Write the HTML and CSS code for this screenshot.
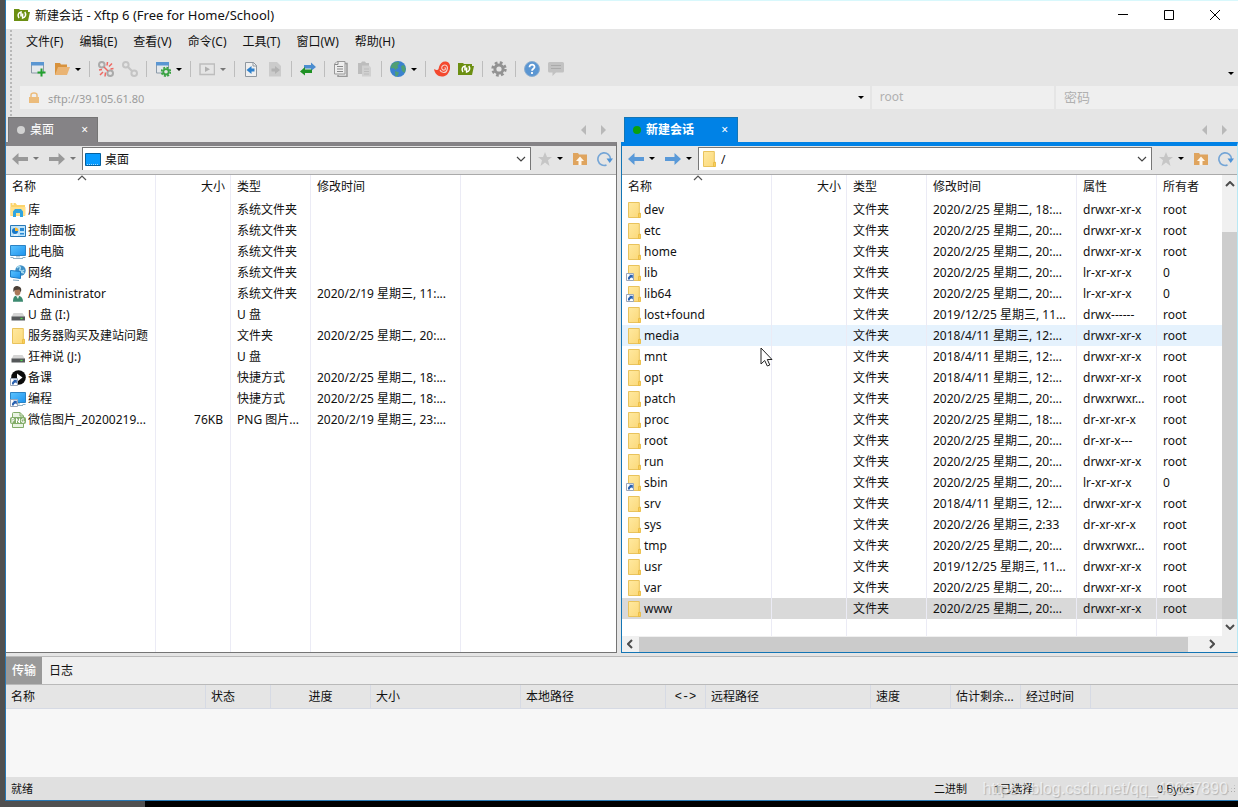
FILE: index.html
```html
<!DOCTYPE html>
<html lang="zh-CN">
<head>
<meta charset="utf-8">
<title>新建会话 - Xftp 6 (Free for Home/School)</title>
<link rel="stylesheet" href="styles.css">
</head>
<body>
<svg class="defs" aria-hidden="true">
  <linearGradient id="gf" x1="0" y1="0" x2="1" y2="1"><stop offset="0" stop-color="#ffe9a0"/><stop offset="1" stop-color="#fbd878"/></linearGradient>
  <linearGradient id="gb" x1="0" y1="0" x2="1" y2="1"><stop offset="0" stop-color="#5cc4ff"/><stop offset="1" stop-color="#1d93ee"/></linearGradient>
  <symbol id="xftp" viewBox="0 0 16 16"><path d="M0 2h5l1 1h8v2h2l-2 9H0z" fill="#6c8f12"/><path d="M5 11C3.200 8.500 4.200 5.500 7 5v4.500M8.600 6.500V11C11.500 10.500 12.500 7.500 10.800 5" fill="none" stroke="#fff" stroke-width="1.500"/></symbol>
  <symbol id="folder" viewBox="0 0 16 16"><path d="M2.500.5h10.800v10.500h1v4.500H2.500z" fill="url(#gf)" stroke="#e9c35c"/><path d="M12.500 11.500v4h1.800v-4z" fill="#fdd364" stroke="#e9b93c" stroke-width=".8"/></symbol>
  <symbol id="link" viewBox="0 0 16 16"><path d="M.5 8.500h7v7h-7z" fill="#fff" stroke="#9aa6b8"/><path d="M2 14.500c-.3-2 .5-3.500 2-3.700L3 9.800h3.800v3.700L5.600 12.400C4.300 12.600 3.800 13.300 3.800 14.500z" fill="#2760b0"/></symbol>
  <symbol id="folderlink" viewBox="0 0 16 16"><use href="#folder"/><use href="#link"/></symbol>
  <symbol id="lib" viewBox="0 0 16 16"><path d="M.5 1h5l1.500 2h8v11H.5z" fill="#fbd46c"/><path d="M2 2h2" stroke="#fff"/><path d="M.5 5h15v8.500H.5z" fill="#ffe08a"/><path d="M3 15V9.500L5 7h6l2 2.500V15h-3v-4H6v4z" fill="#2fa5e0"/></symbol>
  <symbol id="panel" viewBox="0 0 16 16"><path d="M.5 2.500h15v11H.5z" fill="#bfe4fa" stroke="#2a7ab8"/><circle cx="5" cy="8" r="3" fill="#1878c8"/><path d="M5 4.500V8h3.500A3.500 3.500 0 0 0 5 4.500z" fill="#ffb92e"/><path d="M10 5h4v3h-4zM10 10h4v1.500h-4z" fill="#2b8ad4"/><path d="M4 12h4" stroke="#fff"/></symbol>
  <symbol id="pc" viewBox="0 0 16 16"><path d="M.5 1.500h15v10H.5z" fill="url(#gb)" stroke="#2c83c4"/><path d="M6 12h4v1.500H6z" fill="#b9cfdc"/><path d="M3 14.500h10M.5 13.500h3M12.500 13.500h3" stroke="#8fb0c4"/></symbol>
  <symbol id="net" viewBox="0 0 16 16"><circle cx="10.500" cy="5.500" r="5.200" fill="#3f8fc6"/><path d="M7 3c2-3 4-1 3 1s2 3 4 1M11 7l3 1" stroke="#a9dcf0" stroke-width="1.500" fill="none"/><path d="M.5 5.500l10 1v7l-10-1.500z" fill="url(#gb)" stroke="#1e7cc4"/><path d="M3 15l6 .5" stroke="#7fa7c0"/></symbol>
  <symbol id="user" viewBox="0 0 16 16"><path d="M3 15.800c0-4 1-6 4-6.300s6 1.800 6 6.300z" fill="#3c8a70"/><path d="M5.500 9l2.500 4 1.500-4z" fill="#e8f2ee"/><ellipse cx="7.500" cy="5.500" rx="3" ry="4" fill="#a9795a"/><path d="M3.500 6C2.500 1 5-.3 8 .2s4 3 2.700 6L9.500 3.500 5 4z" fill="#4a4038"/></symbol>
  <symbol id="drive" viewBox="0 0 16 16"><path d="M3.500 6h9L15 10H1.500z" fill="#d5d5d5"/><path d="M1.500 9.500h13.500v4H1.500z" fill="#55585a"/><path d="M10.500 11.500h2" stroke="#4ee04e" stroke-width="1.300"/></symbol>
  <symbol id="play" viewBox="0 0 16 16"><circle cx="8.500" cy="7.500" r="7.300" fill="#0b0b0b"/><path d="M7 3.500l5.500 4-5.500 4.200z" fill="#fff"/><use href="#link"/></symbol>
  <symbol id="pclink" viewBox="0 0 16 16"><use href="#pc"/><use href="#link"/></symbol>
  <symbol id="png" viewBox="0 0 16 16"><path d="M2.500 15.500V1.500Q2.500.5 3.500.5H10l3.500 3.500v11.500z" fill="#e9f3e2" stroke="#83ad69"/><path d="M10 .5V4h3.500" fill="none" stroke="#83ad69"/><rect y="5" width="16" height="7" rx="2" fill="#83ad69"/><path d="M2 11V6.500h1.500q1 1.200 0 2.500H2M6.500 11V6.500l3 4.500V6.500M14 7q-2.500-1-2.700 1.500t2.700 1.800V9h-1.200" fill="none" stroke="#fff"/></symbol>
  <symbol id="desk" viewBox="0 0 16 14"><path d="M.5 1.500h15v12H.5z" fill="#079bff" stroke="#05609e"/><path d="M2 12.500h12" stroke="#a7dcff" stroke-dasharray="1 1"/></symbol>
  <symbol id="newwin" viewBox="0 0 16 16"><path d="M1.500 1.500h12v10.500h-12z" fill="#e4e8ec" stroke="#8b9aa8"/><path d="M1 1h13v3.500H1z" fill="#5a96d2"/><path d="M11.500 7.500v8M7.500 11.500h8" stroke="#22a02e" stroke-width="2"/></symbol>
  <symbol id="open" viewBox="0 0 16 16"><path d="M1 2h5l1 1.500h6V7H5l-3 7H1z" fill="#d8923c"/><path d="M4 6h12l-3 8H1z" fill="#eab474"/></symbol>
  <symbol id="chain" viewBox="0 0 16 16"><circle cx="3.800" cy="3.800" r="2.800" fill="none" stroke="currentColor" stroke-width="2"/><circle cx="12.200" cy="12.200" r="2.800" fill="none" stroke="currentColor" stroke-width="2"/><path d="M5.500 5.500l5 5" stroke="currentColor" stroke-width="2.200"/></symbol>
  <symbol id="unchain" viewBox="0 0 16 16"><circle cx="3.800" cy="3.800" r="2.800" fill="none" stroke="#aaa" stroke-width="2"/><circle cx="12.200" cy="12.200" r="2.800" fill="none" stroke="#aaa" stroke-width="2"/><path d="M6 6l4 4M9 4.500l.5-3.500M11 5.500l3-3M12.500 8l3-.5M1 9l3-.5M2 14l3-3M7 15.500l.5-4" stroke="#ee6862" stroke-width="1.500"/></symbol>
  <symbol id="winset" viewBox="0 0 16 16"><path d="M1.500 1.500h12v10.500h-12z" fill="#e4e8ec" stroke="#8b9aa8"/><path d="M1 1h13v3.500H1z" fill="#5a96d2"/><circle cx="11" cy="10.800" r="4.300" fill="none" stroke="#3aa344" stroke-width="1.800" stroke-dasharray="2 1.370"/><circle cx="11" cy="10.800" r="2.700" fill="#e5e5e5" stroke="#3aa344" stroke-width="1.800"/></symbol>
  <symbol id="run" viewBox="0 0 16 16"><path d="M1 3h14.500v10.500H1z" fill="none" stroke="#bdbdbd" stroke-width="1.500"/><path d="M6 5.500l5 2.800-5 2.800z" fill="#b0b0b0"/></symbol>
  <symbol id="docleft" viewBox="0 0 16 16"><path d="M2.500 1.500h8l3 3v11h-11z" fill="#efefef" stroke="#8f979f"/><path d="M10 1v4h4" fill="none" stroke="#8f979f"/><path d="M3.500 9l5-4v2.500h3v3h-3V13z" fill="#2e80cc"/></symbol>
  <symbol id="docright" viewBox="0 0 16 16"><path d="M2 1h8l4 4v10.500H2z" fill="#cbcbcb"/><path d="M13 9L8 5v2.500H4.500v3H8V13z" fill="#b2b2b2"/></symbol>
  <symbol id="swap" viewBox="0 0 16 16"><path d="M4 4h7V1.500L16 6l-5 4V7.500H4z" fill="#4b8dd0"/><path d="M12 8.500H5V6L0 10.500l5 4V12h7z" fill="#1f9124"/></symbol>
  <symbol id="copy" viewBox="0 0 16 16"><path d="M4 .5h8V13H1.500V3z" fill="#eee" stroke="#999"/><path d="M12 2.500h2v13H5V14" fill="none" stroke="#999" stroke-width="1.500"/><path d="M4 5.500h6M4 8h6M4 10.500h6M2 3.500h3V1" fill="none" stroke="#888"/></symbol>
  <symbol id="paste" viewBox="0 0 16 16"><path d="M1 2h3l1-1.500h3L9 2h3v11H1z" fill="#bdbdbd"/><path d="M5 4.500h7l2 2v9H5z" fill="#d0d0d0"/><path d="M7 8h5M7 10.500h5M7 13h5" stroke="#bcbcbc"/></symbol>
  <symbol id="globe" viewBox="0 0 16 16"><circle cx="8" cy="8" r="8" fill="#3b82cf"/><path d="M4 1.500l4.500-1 1 2-2 2 1 2-3 2.500-2-2-2.800.5C.7 4.500 2 2.500 4 1.500zM11 5l3-1 1.800 4-1.300 4-2.500-2zM5 10l4 1.500-1.500 3.500-2 .5z" fill="#4f9f73"/></symbol>
  <symbol id="xshell" viewBox="0 0 16 16"><path d="M0 8c4 2 4.500 1 5-2C6 2 9 0 12 .5c4 .7 5 5 3.500 9C14 14 11 15.500 8 15.500 3.500 15.500.5 12 0 8z" fill="#f4492f"/><path d="M6 9c1 3 6 3.500 7 0 1.500-4-1.500-6-4-4.500-2.500 1.700-1 5 1.300 4.500 1.500-.4 1.400-2.200.3-2.500" fill="none" stroke="#f3d4ce" stroke-width="1.100"/></symbol>
  <symbol id="gear" viewBox="0 0 16 16"><circle cx="8" cy="8" r="6.400" fill="none" stroke="#929292" stroke-width="2.600" stroke-dasharray="2.700 2.330"/><circle cx="8" cy="8" r="4.100" fill="none" stroke="#929292" stroke-width="3"/></symbol>
  <symbol id="help" viewBox="0 0 16 16"><circle cx="8" cy="8" r="7.500" fill="#5b96d2" stroke="#8caed0"/><path d="M5.500 6.200C5.500 2.700 11 3 10.500 6.200 10.300 7.800 8 7.800 8 9.800M8 11v2" fill="none" stroke="#fff" stroke-width="1.800"/></symbol>
  <symbol id="chat" viewBox="0 0 16 16"><path d="M1.500 1h13q1.500 0 1.500 1.500v7.500q0 1.500-1.500 1.500H8L4.500 15v-3.500h-3Q0 11.500 0 10V2.500Q0 1 1.500 1z" fill="#c2c2c2"/><path d="M3 4.500h10M3 7.500h10" stroke="#aaa"/></symbol>
  <symbol id="lock" viewBox="0 0 12 12"><path d="M1 5h10v6H1z" fill="#ecbc7c"/><path d="M3 5V3q0-2 3-2t3 2v2" fill="none" stroke="#ecbc7c" stroke-width="1.500"/></symbol>
  <symbol id="back" viewBox="0 0 16 12"><path d="M0 6l6.500-6v4H16v4H6.500v4z" fill="currentColor"/></symbol>
  <symbol id="fwd" viewBox="0 0 16 12"><path d="M16 6L9.500 0v4H0v4h9.500v4z" fill="currentColor"/></symbol>
  <symbol id="star" viewBox="0 0 14 14"><path d="M7 0l2 5h5l-4 3.200L11.500 14 7 10.500 2.500 14 4 8.200 0 5h5z" fill="#c6c6c6"/></symbol>
  <symbol id="up" viewBox="0 0 14 14"><path d="M0 1h5l1 1.500h8V13H0z" fill="#dfa45e"/><path d="M7 4.500L3 9h2.500v4h3V9H11z" fill="#fff6ea"/></symbol>
  <symbol id="refresh" viewBox="0 0 16 16"><path d="M9.500 14A6.300 6.300 0 1 1 13.500 8" fill="none" stroke="#74a5d6" stroke-width="1.600"/><path d="M9.500 7.500H16l-3.300 4.500z" fill="#4f93d6"/></symbol>
  <symbol id="chev" viewBox="0 0 10 6"><path d="M1 1l4 4 4-4" fill="none" stroke="currentColor" stroke-width="1.200"/></symbol>
  <symbol id="bchev" viewBox="0 0 10 6"><path d="M1 1l4 4 4-4" fill="none" stroke="#4c4c4c" stroke-width="2"/></symbol>
</svg>

<main class="window">
  <header class="titlebar">
    <svg class="ic"><use href="#xftp"/></svg>
    <h1>新建会话<span class="app"> - Xftp 6 (Free for Home/School)</span></h1>
    <button class="wb" aria-label="最小化"><svg viewBox="0 0 12 12"><path d="M1 5.500h10"/></svg></button>
    <button class="wb" aria-label="最大化"><svg viewBox="0 0 12 12"><path d="M1.500 1.500h9v9h-9z"/></svg></button>
    <button class="wb" aria-label="关闭"><svg viewBox="0 0 12 12"><path d="M1 1l10 10M11 1L1 11"/></svg></button>
  </header>

  <div class="bars">
    <nav class="menu">
      <button>文件(F)</button><button>编辑(E)</button><button>查看(V)</button><button>命令(C)</button><button>工具(T)</button><button>窗口(W)</button><button>帮助(H)</button>
    </nav>
    <div class="toolbar">
      <div class="group"><button aria-label="新建"><svg class="ic"><use href="#newwin"/></svg></button><button aria-label="打开"><svg class="ic"><use href="#open"/></svg><i class="dd"></i></button></div>
      <div class="group"><button aria-label="断开"><svg class="ic"><use href="#unchain"/></svg></button><button aria-label="重新连接" class="pale"><svg class="ic"><use href="#chain"/></svg></button></div>
      <div class="group"><button aria-label="属性"><svg class="ic"><use href="#winset"/></svg><i class="dd"></i></button></div>
      <div class="group"><button aria-label="执行"><svg class="ic"><use href="#run"/></svg><i class="dd dim"></i></button></div>
      <div class="group"><button aria-label="左传"><svg class="ic"><use href="#docleft"/></svg></button><button aria-label="右传"><svg class="ic"><use href="#docright"/></svg></button></div>
      <div class="group"><button aria-label="同步"><svg class="ic"><use href="#swap"/></svg></button></div>
      <div class="group"><button aria-label="复制"><svg class="ic"><use href="#copy"/></svg></button><button aria-label="粘贴"><svg class="ic"><use href="#paste"/></svg></button></div>
      <div class="group"><button aria-label="编码"><svg class="ic"><use href="#globe"/></svg><i class="dd"></i></button></div>
      <div class="group"><button aria-label="Xshell"><svg class="ic"><use href="#xshell"/></svg></button><button aria-label="Xftp"><svg class="ic"><use href="#xftp"/></svg></button></div>
      <div class="group"><button aria-label="选项"><svg class="ic"><use href="#gear"/></svg></button></div>
      <div class="group"><button aria-label="帮助"><svg class="ic"><use href="#help"/></svg></button><button aria-label="反馈"><svg class="ic"><use href="#chat"/></svg></button></div>
      <button class="more" aria-label="更多"><i class="dd"></i></button>
    </div>
    <form class="connect">
      <div class="host"><svg class="lock"><use href="#lock"/></svg><input aria-label="主机" value="sftp://39.105.61.80"><button type="button" aria-label="历史"><i class="dd"></i></button></div>
      <input class="usr" aria-label="用户名" placeholder="root">
      <input class="pwd" aria-label="密码" type="password" placeholder="密码">
    </form>
  </div>

  <div class="panes">
    <section class="pane local">
      <div class="tabs"><button class="tab"><i class="dot"></i><span>桌面</span><b>×</b></button><span class="scrollers"><button class="l" aria-label="左"></button><button class="r" aria-label="右"></button></span></div>
      <div class="frame">
        <div class="nav"><button aria-label="后退"><svg class="arrow"><use href="#back"/></svg><i class="dd dim"></i></button><button aria-label="前进"><svg class="arrow"><use href="#fwd"/></svg><i class="dd dim"></i></button>
          <div class="path"><svg class="ic"><use href="#desk"/></svg><input aria-label="路径" value="桌面"><svg class="chev"><use href="#chev"/></svg></div>
          <button aria-label="收藏"><svg class="s14"><use href="#star"/></svg><i class="dd"></i></button><button aria-label="上级"><svg class="s14"><use href="#up"/></svg></button><button aria-label="刷新"><svg class="ic"><use href="#refresh"/></svg></button></div>
        <div class="list">
        <table class="files">
          <colgroup><col class="c150"><col class="c75"><col class="c80"><col class="c150"><col></colgroup>
          <thead><tr><th class="sorted">名称<svg class="sort"><use href="#chev"/></svg></th><th class="num">大小</th><th>类型</th><th>修改时间</th><th></th></tr></thead>
          <tbody>
            <tr><td><svg class="ic"><use href="#lib"/></svg>库</td><td></td><td>系统文件夹</td><td></td><td></td></tr>
            <tr><td><svg class="ic"><use href="#panel"/></svg>控制面板</td><td></td><td>系统文件夹</td><td></td><td></td></tr>
            <tr><td><svg class="ic"><use href="#pc"/></svg>此电脑</td><td></td><td>系统文件夹</td><td></td><td></td></tr>
            <tr><td><svg class="ic"><use href="#net"/></svg>网络</td><td></td><td>系统文件夹</td><td></td><td></td></tr>
            <tr><td><svg class="ic"><use href="#user"/></svg>Administrator</td><td></td><td>系统文件夹</td><td>2020/2/19 星期三, 11:...</td><td></td></tr>
            <tr><td><svg class="ic"><use href="#drive"/></svg>U 盘 (I:)</td><td></td><td>U 盘</td><td></td><td></td></tr>
            <tr><td><svg class="ic"><use href="#folder"/></svg>服务器购买及建站问题</td><td></td><td>文件夹</td><td>2020/2/25 星期二, 20:...</td><td></td></tr>
            <tr><td><svg class="ic"><use href="#drive"/></svg>狂神说 (J:)</td><td></td><td>U 盘</td><td></td><td></td></tr>
            <tr><td><svg class="ic"><use href="#play"/></svg>备课</td><td></td><td>快捷方式</td><td>2020/2/25 星期二, 18:...</td><td></td></tr>
            <tr><td><svg class="ic"><use href="#pclink"/></svg>编程</td><td></td><td>快捷方式</td><td>2020/2/25 星期二, 18:...</td><td></td></tr>
            <tr><td><svg class="ic"><use href="#png"/></svg>微信图片_20200219...</td><td class="num">76KB</td><td>PNG 图片...</td><td>2020/2/19 星期三, 23:...</td><td></td></tr>
            <tr class="fill"><td></td><td></td><td></td><td></td><td></td></tr>
          </tbody>
        </table>
        </div>
      </div>
    </section>

    <section class="pane remote">
      <div class="tabs"><button class="tab"><i class="dot"></i><span>新建会话</span><b>×</b></button><span class="scrollers"><button class="l" aria-label="左"></button><button class="r" aria-label="右"></button></span></div>
      <div class="frame">
        <div class="nav"><button aria-label="后退"><svg class="arrow"><use href="#back"/></svg><i class="dd"></i></button><button aria-label="前进"><svg class="arrow"><use href="#fwd"/></svg><i class="dd"></i></button>
          <div class="path"><svg class="ic"><use href="#folder"/></svg><input aria-label="路径" value="/"><svg class="chev"><use href="#chev"/></svg></div>
          <button aria-label="收藏"><svg class="s14"><use href="#star"/></svg><i class="dd"></i></button><button aria-label="上级"><svg class="s14"><use href="#up"/></svg></button><button aria-label="刷新"><svg class="ic"><use href="#refresh"/></svg></button></div>
        <div class="list">
        <table class="files">
          <colgroup><col class="c150"><col class="c75"><col class="c80"><col class="c150"><col class="c80"><col></colgroup>
          <thead><tr><th class="sorted">名称<svg class="sort"><use href="#chev"/></svg></th><th class="num">大小</th><th>类型</th><th>修改时间</th><th>属性</th><th>所有者</th></tr></thead>
          <tbody>
            <tr><td><svg class="ic"><use href="#folder"/></svg>dev</td><td></td><td>文件夹</td><td>2020/2/25 星期二, 18:...</td><td>drwxr-xr-x</td><td>root</td></tr>
            <tr><td><svg class="ic"><use href="#folder"/></svg>etc</td><td></td><td>文件夹</td><td>2020/2/25 星期二, 20:...</td><td>drwxr-xr-x</td><td>root</td></tr>
            <tr><td><svg class="ic"><use href="#folder"/></svg>home</td><td></td><td>文件夹</td><td>2020/2/25 星期二, 20:...</td><td>drwxr-xr-x</td><td>root</td></tr>
            <tr><td><svg class="ic"><use href="#folderlink"/></svg>lib</td><td></td><td>文件夹</td><td>2020/2/25 星期二, 20:...</td><td>lr-xr-xr-x</td><td>0</td></tr>
            <tr><td><svg class="ic"><use href="#folderlink"/></svg>lib64</td><td></td><td>文件夹</td><td>2020/2/25 星期二, 20:...</td><td>lr-xr-xr-x</td><td>0</td></tr>
            <tr><td><svg class="ic"><use href="#folder"/></svg>lost+found</td><td></td><td>文件夹</td><td>2019/12/25 星期三, 11...</td><td>drwx------</td><td>root</td></tr>
            <tr class="hover"><td><svg class="ic"><use href="#folder"/></svg>media</td><td></td><td>文件夹</td><td>2018/4/11 星期三, 12:...</td><td>drwxr-xr-x</td><td>root</td></tr>
            <tr><td><svg class="ic"><use href="#folder"/></svg>mnt</td><td></td><td>文件夹</td><td>2018/4/11 星期三, 12:...</td><td>drwxr-xr-x</td><td>root</td></tr>
            <tr><td><svg class="ic"><use href="#folder"/></svg>opt</td><td></td><td>文件夹</td><td>2018/4/11 星期三, 12:...</td><td>drwxr-xr-x</td><td>root</td></tr>
            <tr><td><svg class="ic"><use href="#folder"/></svg>patch</td><td></td><td>文件夹</td><td>2020/2/25 星期二, 20:...</td><td>drwxrwxr...</td><td>root</td></tr>
            <tr><td><svg class="ic"><use href="#folder"/></svg>proc</td><td></td><td>文件夹</td><td>2020/2/25 星期二, 18:...</td><td>dr-xr-xr-x</td><td>root</td></tr>
            <tr><td><svg class="ic"><use href="#folder"/></svg>root</td><td></td><td>文件夹</td><td>2020/2/25 星期二, 20:...</td><td>dr-xr-x---</td><td>root</td></tr>
            <tr><td><svg class="ic"><use href="#folder"/></svg>run</td><td></td><td>文件夹</td><td>2020/2/25 星期二, 20:...</td><td>drwxr-xr-x</td><td>root</td></tr>
            <tr><td><svg class="ic"><use href="#folderlink"/></svg>sbin</td><td></td><td>文件夹</td><td>2020/2/25 星期二, 20:...</td><td>lr-xr-xr-x</td><td>0</td></tr>
            <tr><td><svg class="ic"><use href="#folder"/></svg>srv</td><td></td><td>文件夹</td><td>2018/4/11 星期三, 12:...</td><td>drwxr-xr-x</td><td>root</td></tr>
            <tr><td><svg class="ic"><use href="#folder"/></svg>sys</td><td></td><td>文件夹</td><td>2020/2/26 星期三, 2:33</td><td>dr-xr-xr-x</td><td>root</td></tr>
            <tr><td><svg class="ic"><use href="#folder"/></svg>tmp</td><td></td><td>文件夹</td><td>2020/2/25 星期二, 20:...</td><td>drwxrwxr...</td><td>root</td></tr>
            <tr><td><svg class="ic"><use href="#folder"/></svg>usr</td><td></td><td>文件夹</td><td>2019/12/25 星期三, 11...</td><td>drwxr-xr-x</td><td>root</td></tr>
            <tr><td><svg class="ic"><use href="#folder"/></svg>var</td><td></td><td>文件夹</td><td>2020/2/25 星期二, 20:...</td><td>drwxr-xr-x</td><td>root</td></tr>
            <tr class="selected"><td><svg class="ic"><use href="#folder"/></svg>www</td><td></td><td>文件夹</td><td>2020/2/25 星期二, 20:...</td><td>drwxr-xr-x</td><td>root</td></tr>
            <tr class="fill"><td></td><td></td><td></td><td></td><td></td><td></td></tr>
          </tbody>
        </table>
        <div class="vscroll"><svg class="up"><use href="#bchev"/></svg><i></i><svg><use href="#bchev"/></svg></div>
        </div>
        <div class="hscroll"><svg class="lt"><use href="#bchev"/></svg><i></i><svg class="rt"><use href="#bchev"/></svg></div>
      </div>
    </section>
  </div>

  <section class="transfer">
    <div class="ttabs"><button class="on">传输</button><button>日志</button></div>
    <table class="jobs">
      <colgroup><col class="j200"><col class="j65"><col class="j100"><col class="c150"><col class="j145"><col class="j40"><col class="j165"><col class="c80"><col class="j70"><col class="j70"><col></colgroup>
      <thead><tr><th>名称</th><th>状态</th><th class="mid">进度</th><th>大小</th><th>本地路径</th><th class="mid mono">&lt;-&gt;</th><th>远程路径</th><th>速度</th><th>估计剩余...</th><th>经过时间</th><th></th></tr></thead>
    </table>
  </section>
  <footer class="status"><span class="ready">就绪</span><span class="mode">二进制</span><span class="sel">1已选择</span><span class="bytes">0 Bytes</span><i class="grip"></i></footer>
  <span class="mark">https://blog.csdn.net/qq_43667890</span>
</main>
<div class="under"></div>
<svg class="cursor" viewBox="0 0 13 20"><path d="M1 1v16l3.700-3.500L7.300 19l2.500-1-2.500-5.500H12z" fill="#fff" stroke="#222"/></svg>
</body>
</html>
```
FILE: styles.css
```css
* { box-sizing: border-box; }
body {
  margin: 0;
  min-height: 100vh;
  display: flex;
  flex-direction: column;
  padding-left: 5px;
  background: #505050;
  color: #111;
  font: 12px/20px "Noto Sans", "Noto Sans CJK SC", sans-serif;
}
button, input { font: inherit; color: inherit; border: 0; padding: 0; margin: 0; background: none; min-width: 0; outline: 0; }
button { display: flex; align-items: center; }
svg { display: block; flex: none; }
.defs { position: absolute; width: 0; height: 0; }
.ic { width: 16px; height: 16px; }
.s14 { width: 14px; height: 14px; }
.dd { border: 3px solid transparent; border-top-color: #000; border-bottom: 0; width: 6px; height: 3px; flex: none; margin-left: 5px; }
.dd.dim { border-top-color: #777; }

.window {
  position: relative;
  flex: 1;
  display: flex;
  flex-direction: column;
  background: #e5e5e5;
  border-left: 1px solid #2878b4;
  border-bottom: 1px solid #2878b4;
}
.under { height: 6px; margin-left: 140px; background: #000; }

.titlebar { display: flex; align-items: center; height: 29px; padding-left: 8px; background: #fff; border-top: 1px solid #d8f8fc; }
.titlebar h1 { flex: 1; margin: 0 0 0 5px; font-size: 12px; font-weight: 400; }
.app { font-size: 13px; }
.wb { width: 46px; height: 24px; justify-content: center; }
.wb svg { width: 12px; height: 12px; fill: none; stroke: #000; }

.bars { height: 88px; padding-left: 14px; background: radial-gradient(circle, #b8b8b8 1px, transparent 1px) 3px 0 / 4px 4px repeat-y; }
.menu { display: flex; gap: 16px; height: 26px; padding-left: 6px; }
.toolbar { display: flex; align-items: center; height: 31px; padding: 0 4px 3px 10px; }
.group { display: flex; gap: 8px; }
.group + .group { margin-left: 8px; padding-left: 8px; border-left: 1px solid #bdbdbd; }
.pale { color: #c4c4c4; }
.more { margin-left: auto; padding-top: 8px; }
.connect { display: grid; grid-template-columns: minmax(0, 70fr) minmax(0, 15fr) minmax(0, 15fr); gap: 2px; height: 23px; color: #9b9b9b; }
.host, .usr, .pwd { background: #efefef; }
.host { display: flex; align-items: center; padding: 0 6px 0 8px; }
.host input { flex: 1; margin: 2px 0 0 8px; font-size: 11px; }
.lock { width: 12px; height: 12px; }
.usr, .pwd { padding: 0 0 1px 8px; width: 100%; }
.pwd { font-size: 13px; }
::placeholder { color: #b0b0b0; opacity: 1; }

.panes { flex: 1; display: grid; grid-template-columns: minmax(0, 611fr) minmax(0, 617fr); gap: 4px; }
.pane { --line: #858386; --edge: #757575; --arrow: #999; display: flex; flex-direction: column; }
.remote { --line: #0082e6; --edge: #1475b4; --arrow: #5999d8; }
.tabs { display: flex; justify-content: space-between; height: 25px; padding-left: 2px; }
.tab { width: 90px; padding: 0 9px 0 8px; color: #fff; background: var(--line); border: solid var(--edge); border-width: 1px 1px 0; }
.remote .tab { width: 114px; font-weight: 700; margin-left: 1px; }
.tab span { margin-left: 5px; }
.tab b { margin-left: auto; font-weight: 400; font-size: 12px; }
.dot { width: 8px; height: 8px; border-radius: 50%; background: #d2d2d2; }
.remote .dot { background: #0aa010; }
.scrollers { display: flex; align-items: center; gap: 15px; padding-right: 11px; }
.scrollers button { border: 5px solid transparent; }
.scrollers .l { border-right-color: #b9b9b9; border-left: 0; }
.scrollers .r { border-left-color: #b9b9b9; border-right: 0; }
.frame { flex: 1; display: flex; flex-direction: column; background: #fff; border: 1px solid var(--edge); border-top: 4px solid var(--line); border-left: 0; }
.remote .frame { border-left: 1px solid var(--edge); border-right-color: #b8e8f4; }
.nav { display: flex; height: 29px; padding: 1px 3px 4px 6px; background: #e5e5e5; border-bottom: 1px solid #aaa; gap: 10px; }
.arrow { width: 16px; height: 12px; color: var(--arrow); }
.path { flex: 1; display: flex; align-items: center; min-width: 0; padding: 0 4px 0 2px; margin: 0 -3px 0 -4px; background: #fff; border: 1px solid #777; border-bottom: 0; }
.path input { flex: 1; margin: 2px 0 0 4px; }
.chev { width: 10px; height: 6px; color: #444; }

.list { flex: 1; display: flex; align-items: stretch; }
table { table-layout: fixed; border-collapse: separate; border-spacing: 0; width: 100%; }
.c150 { width: 150px; }
.c75 { width: 75px; }
.c80 { width: 80px; }
th { font-weight: 400; text-align: left; }
th, td { white-space: nowrap; overflow: hidden; padding: 0 0 0 6px; }
.files { flex: 1; min-width: 0; }
.files th, .files td { border-right: 1px solid #ebebf5; }
.files th { height: 24px; position: relative; }
.files td { height: 21px; line-height: 21px; }
.files td:first-child { display: flex; align-items: center; gap: 2px; padding-left: 4px; }
.files .num { text-align: right; padding: 0 5px 0 0; }
.files td.num { padding-right: 7px; }
.files th:last-child, .files td:last-child { border-right: 0; }
.files .fill td { height: auto; }
.files .fill td:first-child { display: table-cell; }
.sort { position: absolute; left: 50%; top: 0; width: 10px; height: 6px; margin-left: -4px; rotate: 180deg; color: #555; }
.hover td { background: #e5f2fd; }
.selected td { background: #d9d9d9; }
.vscroll { display: flex; flex-direction: column; align-items: center; gap: 5px; width: 15px; padding: 6px 0; background: #f0f0f0; }
.vscroll i { flex: 1; width: 15px; margin-top: 40px; background: #cdcdcd; }
.vscroll svg, .hscroll svg { width: 10px; height: 6px; }
.vscroll .up { rotate: 180deg; }
.hscroll { display: flex; align-items: center; height: 16px; padding: 0 20px 0 3px; background: #f0f0f0; }
.hscroll i { flex: 1; height: 15px; margin: 0 19px 0 4px; background: #cbcbcb; }
.lt { rotate: 90deg; }
.rt { rotate: -90deg; }

.transfer { height: 121px; margin-top: 3px; background: #f7f7f7; }
.ttabs { display: flex; height: 29px; background: #efefef; border: solid #b9b9b9; border-width: 1px 0; }
.ttabs button { width: 36px; justify-content: center; }
.ttabs .on { color: #fff; background: #999; font-weight: 500; }
.ttabs button + button { width: 38px; }
.jobs th { height: 24px; padding-left: 5px; background: #e5e5e5; border: solid #d6dae4; border-width: 0 1px 1px 0; }
.jobs th:last-child { border-right: 0; }
.jobs .mid { text-align: center; padding: 0; }
.jobs .mono { font-family: "Liberation Mono", monospace; }
.j200 { width: 200px; }
.j65 { width: 65px; }
.j100 { width: 100px; }
.j145 { width: 145px; }
.j40 { width: 40px; }
.j165 { width: 165px; }
.j70 { width: 70px; }

.status { display: flex; align-items: center; height: 23px; padding: 0 2px 0 5px; background: #e0e0e0; font-size: 11px; }
.ready { flex: 1; }
.mode { width: 60px; }
.sel { width: 163px; }
.bytes { width: 70px; }
.grip { width: 9px; height: 9px; background: radial-gradient(circle, #aaa 1px, transparent 1px) 0 0 / 3px 3px; clip-path: polygon(100% 0, 100% 100%, 0 100%); }
.mark { position: absolute; right: 10px; bottom: 1px; font: 16px/20px "Liberation Sans", Arial, sans-serif; color: rgba(255, 255, 255, .6); text-shadow: 1px 1px 1px rgba(0, 0, 0, .2); }
.cursor { position: absolute; left: 760px; top: 347px; width: 13px; height: 20px; }
```
